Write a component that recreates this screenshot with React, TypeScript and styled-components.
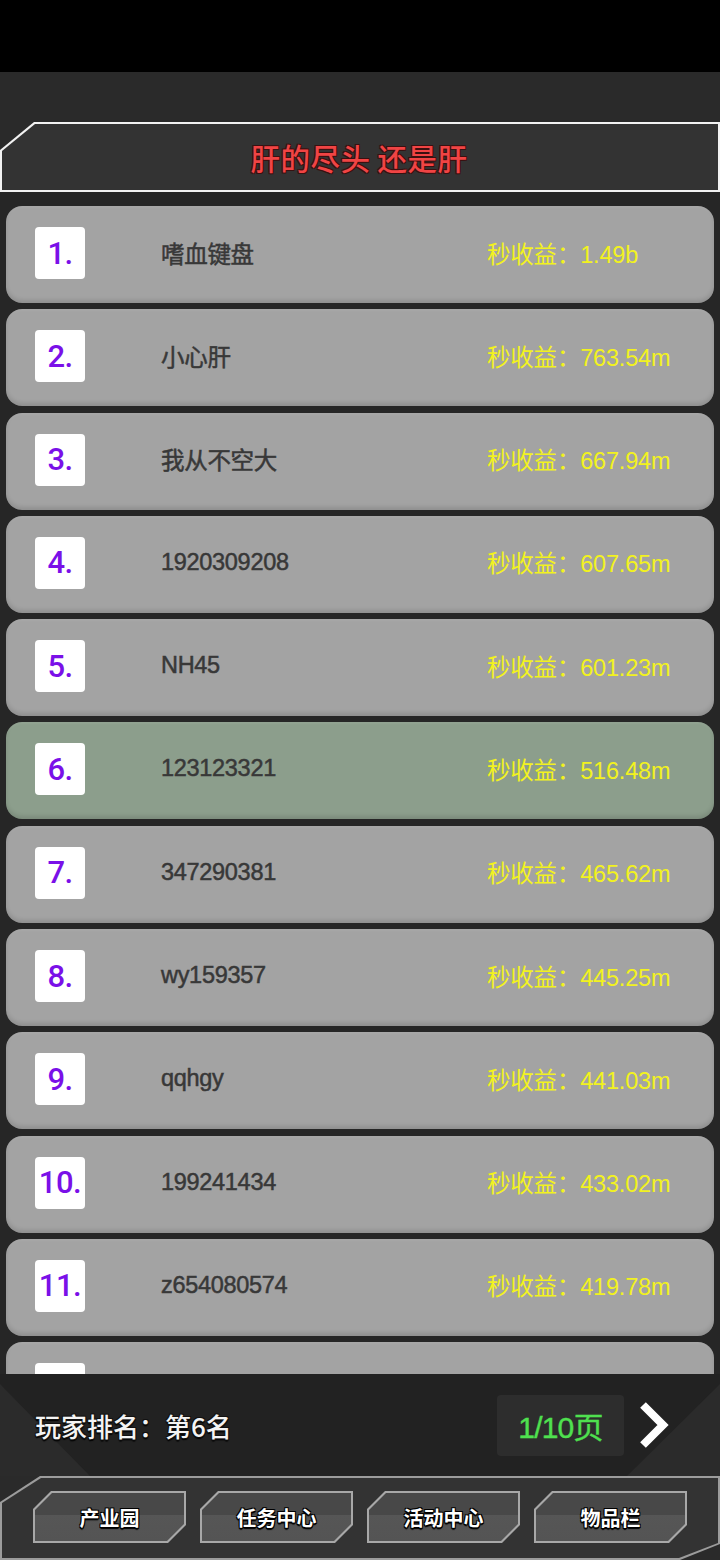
import React from 'react';
import styled, { createGlobalStyle } from 'styled-components';

const GlobalStyle = createGlobalStyle`
  html, body {
    margin: 0;
    padding: 0;
    background: #2a2a2a;
  }
  body {
    font-family: "Liberation Sans", "Noto Sans CJK SC", sans-serif;
  }
`;

const Page = styled.div`
  width: 720px;
  height: 1560px;
  display: flex;
  flex-direction: column;
  background: #2a2a2a;
  overflow: hidden;
`;

const StatusBar = styled.div`
  height: 72px;
  background: #000;
  flex-shrink: 0;
`;

const TopGap = styled.div`
  height: 50px;
  flex-shrink: 0;
`;

const HeaderFrame = styled.div`
  height: 70px;
  flex-shrink: 0;
  padding: 2px;
  box-sizing: border-box;
  background: #f2f2f2;
  clip-path: polygon(34px 0, 100% 0, 100% 100%, 0 100%, 0 28px);
`;

const HeaderInner = styled.div`
  height: 100%;
  display: flex;
  align-items: center;
  justify-content: center;
  background: #333333;
  clip-path: polygon(33px 0, 100% 0, 100% 100%, 0 100%, 0 27px);
`;

const Title = styled.h1`
  margin: 0 0 0 -2px;
  font-family: "Noto Sans CJK SC", sans-serif;
  font-size: 29.5px;
  font-weight: 500;
  color: #f04444;
  letter-spacing: 0.5px;
  text-shadow: -1px -1px 0 #3a1010, 1px -1px 0 #3a1010, -1px 1px 0 #3a1010, 1px 1px 0 #3a1010;
`;

const List = styled.div`
  height: 1182px;
  flex-shrink: 0;
  overflow: hidden;
  background: #262626;
  padding: 14px 6px 0;
  box-sizing: border-box;
  display: flex;
  flex-direction: column;
  gap: 6.3px;
`;

const Row = styled.div<{ $mine?: boolean }>`
  height: 97px;
  flex-shrink: 0;
  border-radius: 16px;
  background: ${p => (p.$mine ? '#8c9e8c' : '#a3a3a3')};
  box-shadow: inset 0 -3px 4px rgba(0, 0, 0, 0.12), inset 0 2px 2px rgba(255, 255, 255, 0.06);
  display: grid;
  grid-template-columns: 126px 326px 1fr;
  align-items: center;
  padding-left: 29px;
`;

const Badge = styled.div`
  width: 50px;
  height: 52px;
  margin-top: -3px;
  background: #fff;
  border-radius: 4px;
  display: flex;
  align-items: center;
  justify-content: center;
  font-family: Roboto, "Liberation Sans", sans-serif;
  font-size: 31px;
  font-weight: 500;
  color: #7a10e8;
  letter-spacing: -0.5px;
`;

const Name = styled.div`
  margin-top: -4px;
  font-family: "Liberation Sans", "Noto Sans CJK SC", sans-serif;
  font-size: 23.5px;
  color: #383838;
  -webkit-text-stroke: 0.5px #383838;
  letter-spacing: -0.3px;
`;

const Income = styled.div`
  margin-top: -4px;
  font-family: "Liberation Sans", "Noto Sans CJK SC", sans-serif;
  font-size: 23.5px;
  color: #f2f21e;
  letter-spacing: -0.2px;
`;

const Footer = styled.div`
  position: relative;
  height: 102px;
  flex-shrink: 0;
  background: #2b2b2b;
  display: flex;
  align-items: center;
  padding: 0 50px 0 35px;
  box-sizing: border-box;

  &::before {
    content: '';
    position: absolute;
    inset: 0;
    background: #222222;
    clip-path: polygon(0 0, 100% 0, 100% 10px, calc(100% - 93px) 100%, 90px 100%, 0 10px);
  }
`;

const RankText = styled.div`
  position: relative;
  flex: 1;
  font-family: "Noto Sans CJK SC", sans-serif;
  font-size: 26px;
  font-weight: 500;
  color: #f4f4f4;
  text-shadow: -1px -1px 0 #111, 1px -1px 0 #111, -1px 1px 0 #111, 1px 1px 0 #111, 0 2px 1px #000;
`;

const PageBox = styled.div`
  position: relative;
  width: 127px;
  height: 61px;
  background: #2d2d2d;
  border-radius: 4px;
  display: flex;
  align-items: center;
  justify-content: center;
  font-family: "Liberation Sans", "Noto Sans CJK SC", sans-serif;
  font-size: 30px;
  color: #4fe04f;
  -webkit-text-stroke: 0.4px #4fe04f;
  letter-spacing: -0.8px;
`;

const NextButton = styled.div`
  position: relative;
  margin-left: 14px;
  width: 32px;
  height: 48px;
  display: flex;
  align-items: center;
`;

const NavFrame = styled.div`
  flex: 1;
  padding: 2px;
  box-sizing: border-box;
  background: #9c9c9c;
  clip-path: polygon(40px 0, 100% 0, 100% calc(100% - 16px), calc(100% - 40px) 100%, 0 100%, 0 26px);
`;

const NavInner = styled.div`
  height: 100%;
  background: #333333;
  clip-path: polygon(39px 0, 100% 0, 100% calc(100% - 15px), calc(100% - 39px) 100%, 0 100%, 0 25px);
  display: flex;
  gap: 14px;
  padding: 13px 0 0 31px;
  box-sizing: border-box;
`;

const NavButton = styled.div`
  width: 153px;
  height: 52px;
  padding: 2px;
  box-sizing: border-box;
  background: #a8a8a8;
  clip-path: polygon(18px 0, 100% 0, 100% calc(100% - 18px), calc(100% - 18px) 100%, 0 100%, 0 18px);
`;

const NavFace = styled.div`
  height: 100%;
  background: linear-gradient(to bottom, #484848 0%, #484848 45%, #565656 45%, #545454 100%);
  clip-path: polygon(17px 0, 100% 0, 100% calc(100% - 17px), calc(100% - 17px) 100%, 0 100%, 0 17px);
  display: flex;
  align-items: center;
  justify-content: center;
  font-family: "Noto Sans CJK SC", sans-serif;
  font-size: 20px;
  font-weight: 700;
  color: #fff;
  text-shadow: -1px -1px 0 #000, 1px -1px 0 #000, -1px 1px 0 #000, 1px 1px 0 #000, 0 2px 1px #000;
`;

const players = [
  { name: '嗜血键盘', income: '1.49b' },
  { name: '小心肝', income: '763.54m' },
  { name: '我从不空大', income: '667.94m' },
  { name: '1920309208', income: '607.65m' },
  { name: 'NH45', income: '601.23m' },
  { name: '123123321', income: '516.48m' },
  { name: '347290381', income: '465.62m' },
  { name: 'wy159357', income: '445.25m' },
  { name: 'qqhgy', income: '441.03m' },
  { name: '199241434', income: '433.02m' },
  { name: 'z654080574', income: '419.78m' },
];

const myRank = 6;

const navItems = ['产业园', '任务中心', '活动中心', '物品栏'];

const App = () => {
  return (
    <Page>
      <GlobalStyle />
      <StatusBar />
      <TopGap />
      <HeaderFrame>
        <HeaderInner>
          <Title>肝的尽头 还是肝</Title>
        </HeaderInner>
      </HeaderFrame>
      <List>
        {players.map((p, i) => (
          <Row key={i} $mine={i + 1 === myRank}>
            <Badge>{i + 1}.</Badge>
            <Name>{p.name}</Name>
            <Income>秒收益：{p.income}</Income>
          </Row>
        ))}
        {/* next row, scrolled mostly out of view */}
        <Row>
          <Badge />
        </Row>
      </List>
      <Footer>
        <RankText>玩家排名：第{myRank}名</RankText>
        <PageBox>1/10页</PageBox>
        <NextButton>
          <svg width="32" height="48" viewBox="0 0 32 48">
            <polyline points="5,4 25,24 5,44" fill="none" stroke="#fff" strokeWidth="8" strokeLinejoin="miter" />
          </svg>
        </NextButton>
      </Footer>
      <NavFrame>
        <NavInner>
          {navItems.map(n => (
            <NavButton key={n}>
              <NavFace>{n}</NavFace>
            </NavButton>
          ))}
        </NavInner>
      </NavFrame>
    </Page>
  );
};

export default App;
